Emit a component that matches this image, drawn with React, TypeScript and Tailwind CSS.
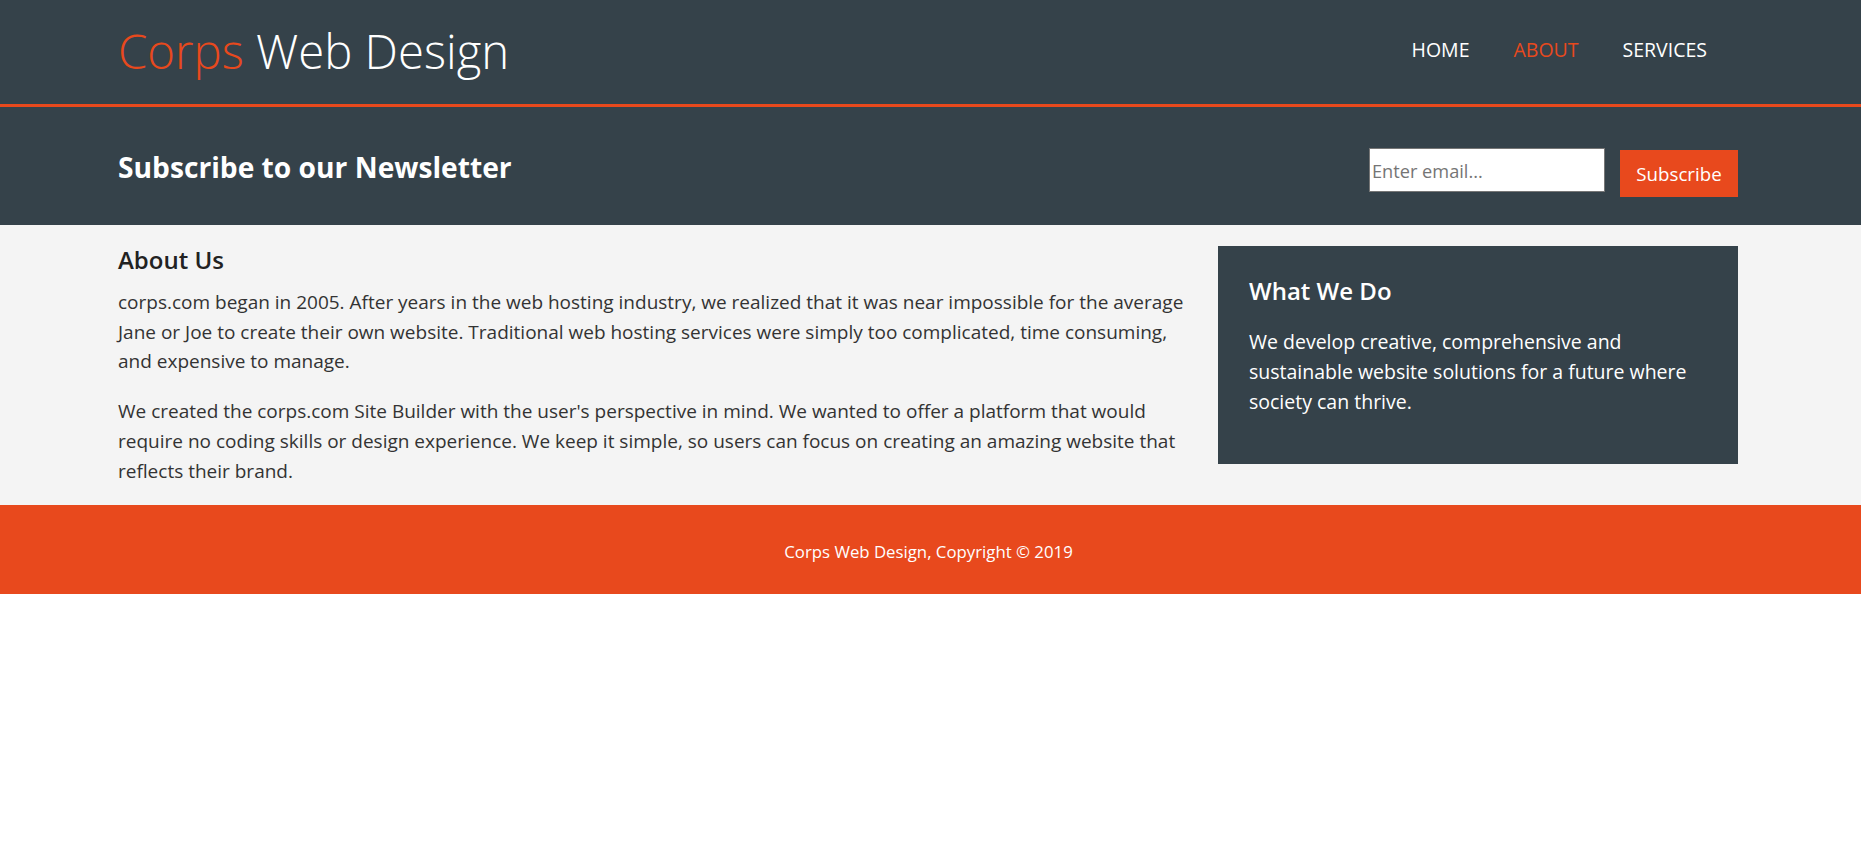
import React from "react";

export default function App() {
  return (
    <div className="min-h-[853px] bg-white font-['Open_Sans','Noto_Sans',sans-serif]">
      <header className="h-[107px] bg-[#35424a] border-b-[3px] border-[#e8491d]">
        <div className="w-[1620px] ml-[118px] h-full flex items-start justify-between">
          <h1 className="mt-[27px] text-[47.3px] leading-none font-light text-white">
            <span className="text-[#e8491d]">Corps</span> Web Design
          </h1>
          <nav className="mt-[40px]">
            <ul className="flex gap-[44px] pr-[31px] text-[19.5px] leading-none uppercase text-white">
              <li>Home</li>
              <li className="text-[#e8491d]">About</li>
              <li>Services</li>
            </ul>
          </nav>
        </div>
      </header>

      <section className="h-[118px] bg-[#35424a] text-white">
        <div className="w-[1620px] ml-[118px] h-full flex items-start justify-between">
          <h2 className="mt-[46px] text-[28.2px] leading-none font-bold">Subscribe to our Newsletter</h2>
          <form className="mt-[41px] flex items-start gap-[15px]">
            <input
              type="email"
              placeholder="Enter email..."
              className="w-[236px] h-[44px] bg-white border border-[#767676] px-[2px] pt-[2px] text-[18.2px] text-[#333] placeholder:text-[#757575] outline-none"
            />
            <button
              type="button"
              className="mt-[2px] w-[118px] h-[47px] pt-[2px] bg-[#e8491d] text-white text-[18.7px]"
            >
              Subscribe
            </button>
          </form>
        </div>
      </section>

      <section className="h-[280px] bg-[#f4f4f4]">
        <div className="w-[1620px] ml-[118px] flex justify-between">
          <div className="w-[1080px] pt-[23px] text-[#333]">
            <h2 className="text-[24px] leading-none font-semibold text-[#222] mb-[16px]">About Us</h2>
            <p className="text-[19px] leading-[29.7px] mb-[20px]">
              corps.com began in 2005. After years in the web hosting industry, we realized that it was near impossible for the average Jane or Joe to create their own website. Traditional web hosting services were simply too complicated, time consuming, and expensive to manage.
            </p>
            <p className="text-[19px] leading-[29.7px]">
              We created the corps.com Site Builder with the user's perspective in mind. We wanted to offer a platform that would require no coding skills or design experience. We keep it simple, so users can focus on creating an amazing website that reflects their brand.
            </p>
          </div>
          <aside className="mt-[21px] w-[520px] h-[218px] bg-[#35424a] text-white pt-[33px] px-[31px]">
            <h3 className="text-[24px] leading-none font-semibold mb-[24px]">What We Do</h3>
            <p className="w-[440px] text-[19.5px] leading-[30px]">
              We develop creative, comprehensive and sustainable website solutions for a future where society can thrive.
            </p>
          </aside>
        </div>
      </section>

      <footer className="h-[89px] pt-[4px] bg-[#e8491d] text-white flex items-center justify-center">
        <p className="text-[16.8px] ml-[-4px]">Corps Web Design, Copyright © 2019</p>
      </footer>
    </div>
  );
}
